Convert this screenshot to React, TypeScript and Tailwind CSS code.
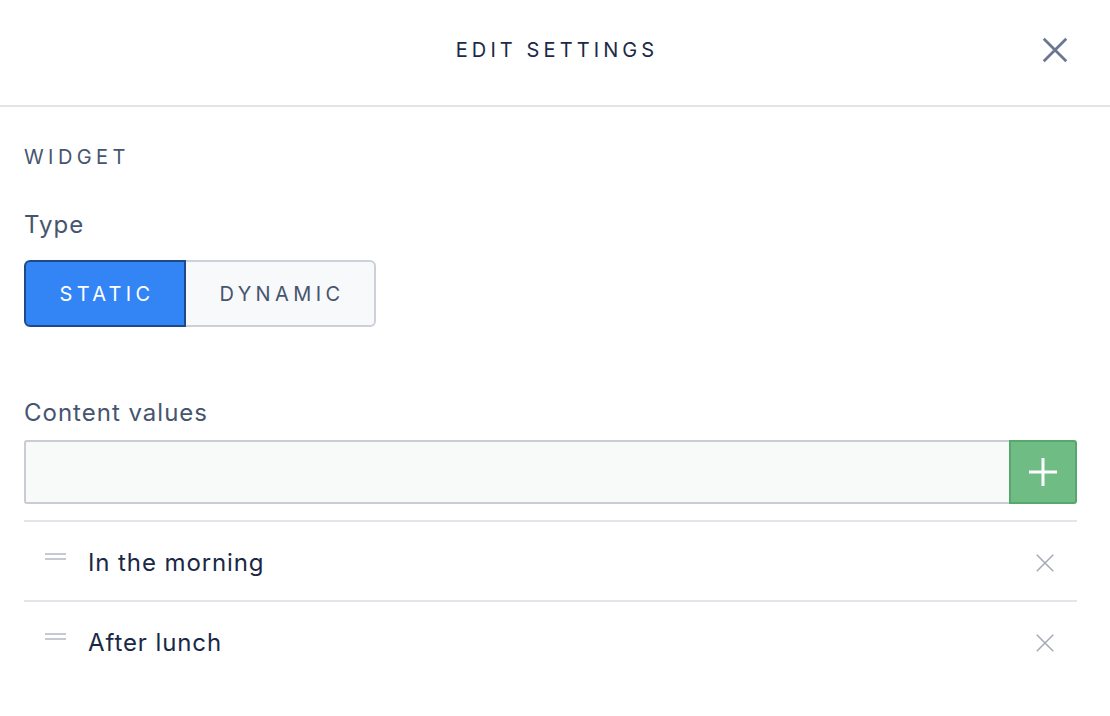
import React from "react";

function XIcon({ size, color, stroke }: { size: number; color: string; stroke: number }) {
  return (
    <svg width={size} height={size} viewBox="0 0 24 24" fill="none">
      <path d="M3 3L21 21M21 3L3 21" stroke={color} strokeWidth={stroke} strokeLinecap="butt" />
    </svg>
  );
}

function Row({ label }: { label: string }) {
  return (
    <div className="flex items-center h-[80px] border-t-2 border-[#e2e6ea]">
      <div className="w-[64px] flex justify-start pl-[21px] self-start pt-[31px]">
        <div className="flex flex-col gap-[3px]">
          <div className="w-[21px] h-[2px] bg-[#c5cad2]" />
          <div className="w-[21px] h-[2px] bg-[#c5cad2]" />
        </div>
      </div>
      <div className="flex-1 text-[24px] tracking-[0.9px] text-[#1a2847] leading-[28px] pt-[4px]">{label}</div>
      <div className="pr-[21px] pt-[4px]">
        <XIcon size={22} color="#a3aab6" stroke={1.6} />
      </div>
    </div>
  );
}

export default function App() {
  return (
    <div className="w-[1110px] h-[716px] bg-white" style={{ fontFamily: "Inter, 'Open Sans', sans-serif" }}>
      <div className="relative h-[107px] flex items-center justify-center border-b-2 border-[#e2e4e8] pb-[5px]">
        <div className="text-[20px] tracking-[4.1px] pl-[4px] text-[#1b2a47] leading-[24px]">EDIT SETTINGS</div>
        <div className="absolute right-[40px] top-[35px]">
          <XIcon size={30} color="#6b7690" stroke={2.2} />
        </div>
      </div>
      <div className="px-[24px] pr-[33px]">
        <div className="pt-[38px] text-[20px] tracking-[4.4px] text-[#46556f] leading-[24px]">WIDGET</div>
        <div className="mt-[42px] text-[24px] tracking-[1px] text-[#46556f] leading-[28px]">Type</div>
        <div className="mt-[21px] flex">
          <div className="w-[162px] h-[67px] flex items-center justify-center bg-[#3385f5] border-2 border-[#1d4a8a] rounded-l-[6px] text-white text-[20px] tracking-[4.3px] pl-[4px]">
            STATIC
          </div>
          <div className="w-[190px] h-[67px] flex items-center justify-center bg-[#f8f9fa] border-2 border-l-0 border-[#ccd0d8] rounded-r-[6px] text-[#46556f] text-[20px] tracking-[4.4px] pl-[4px]">
            DYNAMIC
          </div>
        </div>
        <div className="mt-[72px] text-[24px] tracking-[1px] text-[#46556f] leading-[28px]">Content values</div>
        <div className="mt-[13px] flex h-[64px]">
          <div className="flex-1 bg-[#f8f9f9] border-2 border-r-0 border-[#c9ccd4] rounded-l-[3px]" />
          <div className="w-[68px] bg-[#6fbc85] border-2 border-[#58a86d] rounded-r-[3px] flex items-center justify-center">
            <svg width="30" height="30" viewBox="0 0 30 30">
              <path d="M15 1V29M1 15H29" stroke="white" strokeWidth="3" />
            </svg>
          </div>
        </div>
        <div className="mt-[16px]">
          <Row label="In the morning" />
          <Row label="After lunch" />
        </div>
      </div>
    </div>
  );
}
